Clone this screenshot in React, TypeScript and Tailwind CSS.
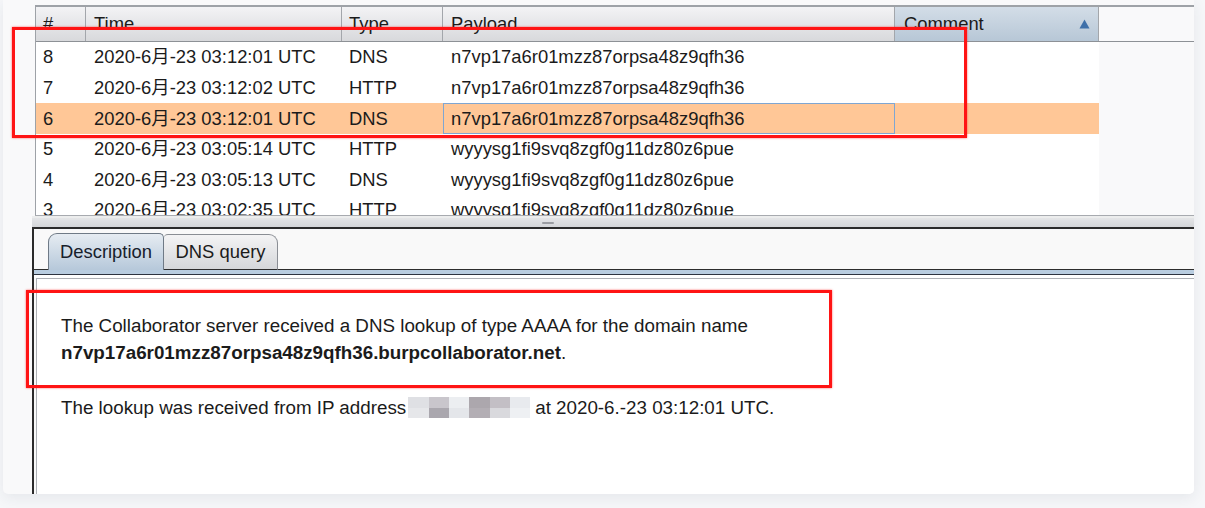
import React from "react";

// Collaborator interactions table + detail pane, shown inside a screenshot card
type Interaction = {
    id: string;
    time: string;
    type: string;
    payload: string;
    selected?: boolean;
};

const interactions: Interaction[] = [
    { id: "8", time: "2020-6月-23 03:12:01 UTC", type: "DNS", payload: "n7vp17a6r01mzz87orpsa48z9qfh36" },
    { id: "7", time: "2020-6月-23 03:12:02 UTC", type: "HTTP", payload: "n7vp17a6r01mzz87orpsa48z9qfh36" },
    { id: "6", time: "2020-6月-23 03:12:01 UTC", type: "DNS", payload: "n7vp17a6r01mzz87orpsa48z9qfh36", selected: true },
    { id: "5", time: "2020-6月-23 03:05:14 UTC", type: "HTTP", payload: "wyyysg1fi9svq8zgf0g11dz80z6pue" },
    { id: "4", time: "2020-6月-23 03:05:13 UTC", type: "DNS", payload: "wyyysg1fi9svq8zgf0g11dz80z6pue" },
    { id: "3", time: "2020-6月-23 03:02:35 UTC", type: "HTTP", payload: "wyyysg1fi9svq8zgf0g11dz80z6pue" },
];

// blurred-out IP address blocks
const mosaicTop = ["#dfe0e4", "#c9c6cc", "#eceef1", "#aca7ad", "#c3bfc5", "#e8eaee"];
const mosaicBottom = ["#e6e7ea", "#aaa7ae", "#e4e6ea", "#b3aeb4", "#d9d9dd", "#eef0f3"];

function HeaderCell({ label, className }: { label: string; className: string }) {
    return (
        <div className={`h-full flex items-center border-r border-[#a3a6ab] ${className}`}>
            {label}
        </div>
    );
}

export default function App() {
    return (
        <div className="relative w-[1205px] h-[508px] bg-[#f6f7f9] overflow-hidden font-['Liberation_Sans','Noto_Sans_CJK_SC',sans-serif] text-[#1b1b1b]">
            <div className="ml-[3px] w-[1191px] h-[494px] bg-[#f9f9fa] rounded-b-[5px] shadow-[0_4px_14px_rgba(40,50,80,0.08)] flex flex-col overflow-hidden">
                {/* Top pane: interactions table */}
                <div className="pt-[5px] pl-[32px]">
                    <div className="h-[210px] border-t-2 border-l border-[#9ea2a7] flex flex-col">
                        <div className="h-[35px] flex border-b border-[#8d9196] text-[18.4px]">
                            <div className="flex h-full bg-gradient-to-b from-[#f3f3f5] to-[#d8d9dc]">
                                <HeaderCell label="#" className="w-[50px] pl-[7px]" />
                                <HeaderCell label="Time" className="w-[256px] pl-[8px]" />
                                <HeaderCell label="Type" className="w-[101px] pl-[7px]" />
                                <HeaderCell label="Payload" className="w-[452px] pl-[8px]" />
                            </div>
                            <div className="w-[204px] h-full flex items-center justify-between pl-[9px] pr-[8px] border-r border-[#a3a6ab] bg-gradient-to-b from-[#d3dde7] to-[#b7c7d6]">
                                <span>Comment</span>
                                <svg width="11" height="10" viewBox="0 0 11 10">
                                    <path d="M5.5 0.5 L10.5 9.5 L0.5 9.5 Z" fill="#3f70a9" />
                                </svg>
                            </div>
                        </div>
                        <div className="h-[173px] overflow-hidden">
                            <div className="w-[1063px] h-full bg-white">
                                {interactions.map((row) => (
                                    <div
                                        key={row.id}
                                        className={`h-[30.6px] flex text-[18.4px] ${row.selected ? "bg-[#ffc797]" : ""}`}
                                    >
                                        <div className="w-[50px] flex items-center pl-[7px]">{row.id}</div>
                                        <div className="w-[256px] flex items-center pl-[8px]">{row.time}</div>
                                        <div className="w-[101px] flex items-center pl-[7px]">{row.type}</div>
                                        <div
                                            className={`w-[452px] flex items-center pl-[7px] border ${row.selected ? "border-[#7fa6d2]" : "border-transparent"}`}
                                        >
                                            {row.payload}
                                        </div>
                                        <div className="w-[204px]" />
                                    </div>
                                ))}
                            </div>
                        </div>
                    </div>
                </div>

                {/* Split divider */}
                <div className="ml-[29px] h-[12px] flex flex-col">
                    <div className="ml-[3px] h-px bg-[#a7aaaf]" />
                    <div className="h-[2px] bg-[#eceded]" />
                    <div className="flex-1 bg-gradient-to-b from-[#e4e5e7] to-[#d4d6d9] flex justify-center items-center">
                        <div className="ml-[-130px] w-[12px] h-[2px] rounded-full bg-[#9a9ca1]" />
                    </div>
                </div>

                {/* Bottom pane: details */}
                <div className="ml-[29px] flex-1 border-l-2 border-t-2 border-[#2b2b2b] flex flex-col bg-[#f9f9f9]">
                    <div className="flex items-end pt-[4px] h-[41px] text-[18.4px]">
                        <div className="w-[14px] h-full border-b border-[#2d2d2d]" />
                        <div className="w-[116px] h-full flex items-center justify-center rounded-tl-[9px] rounded-tr-[5px] border border-b-0 border-[#6f7a86] bg-gradient-to-b from-[#e6ecf2] to-[#b6c8da] text-[#17202b]">
                            Description
                        </div>
                        <div className="w-[114px] h-[36px] flex items-center justify-center rounded-tl-[4px] rounded-tr-[9px] border border-l-0 border-[#8a8e94] border-b-[#2d2d2d] bg-gradient-to-b from-[#f4f4f5] to-[#d5d7da]">
                            DNS query
                        </div>
                        <div className="flex-1 h-full border-b border-[#2d2d2d]" />
                    </div>
                    <div className="h-[4px] bg-[#b9cde0]" />
                    <div className="h-px bg-[#2e3440]" />
                    <div className="h-[3px] bg-white" />
                    <div className="ml-[2px] flex-1 border-l border-t border-[#aeb1b6] bg-white pt-[33px] pl-[24px] text-[18.8px] leading-[27px]">
                        <p className="mb-[28px]">
                            The Collaborator server received a DNS lookup of type AAAA for the domain name
                            <br />
                            <span className="font-bold">n7vp17a6r01mzz87orpsa48z9qfh36.burpcollaborator.net</span>.
                        </p>
                        <p className="flex items-center">
                            <span>The lookup was received from IP address</span>
                            <span className="ml-[2px] w-[122px] h-[21px] flex flex-col">
                                <span className="flex h-1/2">
                                    {mosaicTop.map((c, i) => (
                                        <span key={i} className="flex-1" style={{ backgroundColor: c }} />
                                    ))}
                                </span>
                                <span className="flex h-1/2">
                                    {mosaicBottom.map((c, i) => (
                                        <span key={i} className="flex-1" style={{ backgroundColor: c }} />
                                    ))}
                                </span>
                            </span>
                            <span className="ml-[5px]">at 2020-6.-23 03:12:01 UTC.</span>
                        </p>
                    </div>
                </div>
            </div>

            {/* Red annotation boxes */}
            <div className="absolute left-[12px] top-[27px] w-[955px] h-[111px] border-[3px] border-[#ff1414] shadow-[0_0_2px_rgba(255,0,0,0.6)]" />
            <div className="absolute left-[26px] top-[290px] w-[806px] h-[98px] border-[3px] border-[#ff1414] shadow-[0_0_2px_rgba(255,0,0,0.6)]" />
        </div>
    );
}
